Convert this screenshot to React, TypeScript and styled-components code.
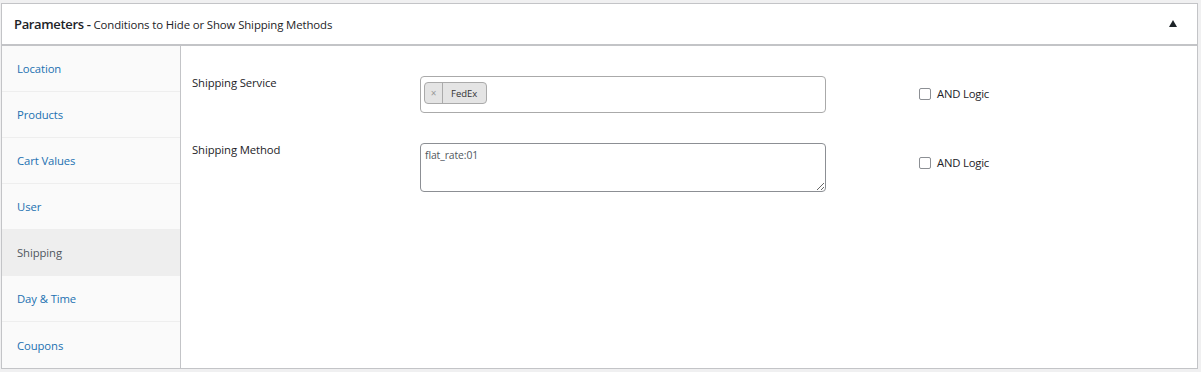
import React from "react";
import styled, { createGlobalStyle } from "styled-components";

const Global = createGlobalStyle`
  html, body { margin: 0; padding: 0; background: #f0f0f1; }
  body { font-family: "Open Sans", "Noto Sans", sans-serif; color: #3c434a; }
  * { box-sizing: border-box; }
`;

const Page = styled.div`
  padding: 3px 3px 3px 1px;
`;

const Panel = styled.div`
  background: #fff;
  border: 1px solid #c3c4c7;
  height: 366px;
  display: flex;
  flex-direction: column;
`;

const Header = styled.div`
  height: 42px;
  flex: none;
  border-bottom: 2px solid #c3c4c7;
  display: flex;
  align-items: center;
  padding: 0 20px 0 12px;
`;

const Title = styled.h2`
  margin: 0;
  flex: 1;
  font-size: 13px;
  font-weight: 600;
  color: #1d2327;
  letter-spacing: -0.35px;
`;

const Sub = styled.span`
  font-size: 11.4px;
  font-weight: 400;
  letter-spacing: -0.12px;
`;

const Toggle = styled.span`
  width: 0;
  height: 0;
  border-left: 4.5px solid transparent;
  border-right: 4.5px solid transparent;
  border-bottom: 7px solid #1d2327;
  margin-top: -2px;
`;

const Body = styled.div`
  flex: 1;
  display: flex;
`;

const Side = styled.ul`
  list-style: none;
  margin: 0;
  padding: 0;
  width: 179px;
  flex: none;
  background: #fafafa;
  border-right: 1px solid #c3c4c7;
`;

const Tab = styled.li<{ $active?: boolean }>`
  height: 46px;
  border-bottom: 1px solid #eee;
  display: flex;
  align-items: center;
  padding-left: 15px;
  font-size: 11.3px;
  letter-spacing: -0.1px;
  color: ${(p) => (p.$active ? "#50575e" : "#2271b1")};
  background: ${(p) => (p.$active ? "#eee" : "transparent")};
  &:last-child { border-bottom: none; }
`;

const Content = styled.div`
  flex: 1;
  padding: 30px 0 0 11px;
  display: grid;
  grid-template-columns: 228px 406px auto;
  row-gap: 30px;
  align-content: start;
`;

const Label = styled.div`
  font-size: 11.3px;
  color: #1d2327;
  letter-spacing: -0.1px;
  margin-top: -1px;
`;

const SelectBox = styled.div`
  height: 37px;
  border: 1px solid #aaa;
  border-radius: 4px;
  padding: 5px 3px;
  display: flex;
  align-items: flex-start;
`;

const Tag = styled.span`
  display: inline-flex;
  height: 22px;
  border: 1px solid #aaa;
  border-radius: 4px;
  background: #e4e4e4;
  font-size: 9.5px;
  color: #333;
  align-items: stretch;
`;

const TagX = styled.span`
  width: 18px;
  display: flex;
  align-items: center;
  justify-content: center;
  color: #999;
  font-size: 10px;
  border-right: 1px solid #aaa;
`;

const TagText = styled.span`
  display: flex;
  align-items: center;
  padding: 0 9px 0 8px;
`;

const Area = styled.textarea`
  height: 49px;
  width: 406px;
  border: 1px solid #8c8f94;
  border-radius: 4px;
  padding: 4px 4px;
  font-family: inherit;
  font-size: 10.4px;
  color: #50575e;
  letter-spacing: -0.1px;
  resize: vertical;
  margin: 0;
  display: block;
`;

const Check = styled.label<{ $top: number }>`
  display: flex;
  align-items: center;
  gap: 6px;
  margin-left: 93px;
  font-size: 11.3px;
  color: #1d2327;
  letter-spacing: -0.2px;
  padding-top: ${(p) => p.$top}px;
  height: fit-content;
`;

const Box = styled.span`
  width: 12px;
  height: 12px;
  border: 1px solid #8c8f94;
  border-radius: 2px;
  background: #fff;
`;

const tabs = ["Location", "Products", "Cart Values", "User", "Shipping", "Day & Time", "Coupons"];

export default function App() {
  return (
    <>
      <Global />
      <Page>
        <Panel>
          <Header>
            <Title>
              Parameters - <Sub>Conditions to Hide or Show Shipping Methods</Sub>
            </Title>
            <Toggle />
          </Header>
          <Body>
            <Side>
              {tabs.map((t) => (
                <Tab key={t} $active={t === "Shipping"}>
                  {t}
                </Tab>
              ))}
            </Side>
            <Content>
              <Label>Shipping Service</Label>
              <SelectBox>
                <Tag>
                  <TagX>×</TagX>
                  <TagText>FedEx</TagText>
                </Tag>
              </SelectBox>
              <Check $top={10}>
                <Box />
                AND Logic
              </Check>
              <Label>Shipping Method</Label>
              <Area defaultValue="flat_rate:01" />
              <Check $top={12}>
                <Box />
                AND Logic
              </Check>
            </Content>
          </Body>
        </Panel>
      </Page>
    </>
  );
}
